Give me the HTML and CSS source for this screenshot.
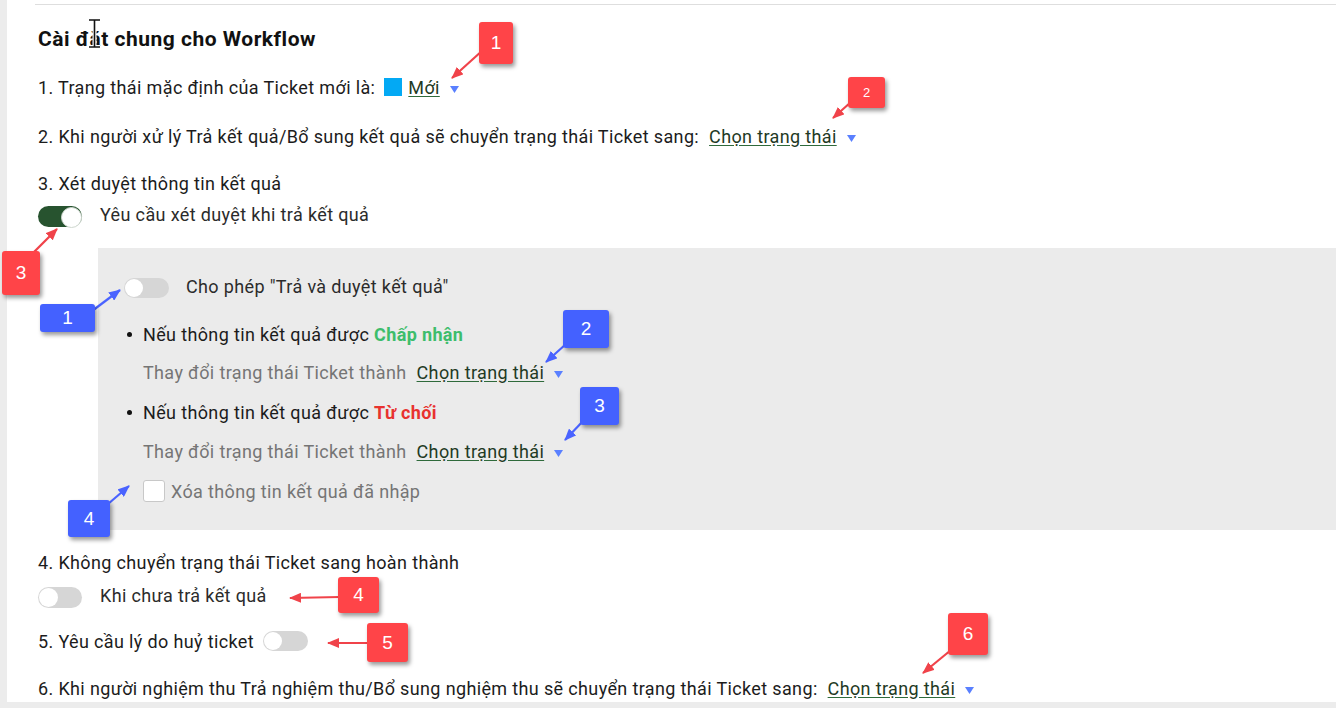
FILE: index.html
```html
<!DOCTYPE html>
<html lang="vi">
<head>
<meta charset="utf-8">
<title>Cài đặt chung cho Workflow</title>
<link rel="stylesheet" href="styles.css">
</head>
<body>
<div class="page">
  <div class="content">
    <h2 class="title">Cài đặt chung cho Workflow</h2>

    <div class="row r1">
      <span>1. Trạng thái mặc định của Ticket mới là:</span>
      <span class="swatch"></span>
      <a class="link">Mới</a>
      <svg class="caret" width="9" height="7" viewBox="0 0 9 7"><polygon points="0,0 9,0 4.5,7"/></svg>
    </div>

    <div class="row r2">
      <span>2. Khi người xử lý Trả kết quả/Bổ sung kết quả sẽ chuyển trạng thái Ticket sang:</span>
      <a class="link gap-l">Chọn trạng thái</a>
      <svg class="caret" width="9" height="7" viewBox="0 0 9 7"><polygon points="0,0 9,0 4.5,7"/></svg>
    </div>

    <div class="row r3"><span>3. Xét duyệt thông tin kết quả</span></div>

    <div class="row r3t">
      <span class="toggle on"></span>
      <span class="tlabel">Yêu cầu xét duyệt khi trả kết quả</span>
    </div>

    <div class="panel">
      <div class="row p1">
        <span class="toggle wide"></span>
        <span class="tlabel">Cho phép "Trả và duyệt kết quả"</span>
      </div>
      <div class="row p2">
        <span class="dot"></span>
        <span>Nếu thông tin kết quả được <b class="ok">Chấp nhận</b></span>
      </div>
      <div class="row p3 sub">
        <span class="muted">Thay đổi trạng thái Ticket thành</span>
        <a class="link gap-l">Chọn trạng thái</a>
        <svg class="caret" width="9" height="7" viewBox="0 0 9 7"><polygon points="0,0 9,0 4.5,7"/></svg>
      </div>
      <div class="row p4">
        <span class="dot"></span>
        <span>Nếu thông tin kết quả được <b class="no">Từ chối</b></span>
      </div>
      <div class="row p5 sub">
        <span class="muted">Thay đổi trạng thái Ticket thành</span>
        <a class="link gap-l">Chọn trạng thái</a>
        <svg class="caret" width="9" height="7" viewBox="0 0 9 7"><polygon points="0,0 9,0 4.5,7"/></svg>
      </div>
      <div class="row p6 sub">
        <span class="checkbox"></span>
        <span class="muted">Xóa thông tin kết quả đã nhập</span>
      </div>
    </div>

    <div class="row r4"><span>4. Không chuyển trạng thái Ticket sang hoàn thành</span></div>
    <div class="row r4t">
      <span class="toggle"></span>
      <span class="tlabel">Khi chưa trả kết quả</span>
    </div>

    <div class="row r5">
      <span>5. Yêu cầu lý do huỷ ticket</span>
      <span class="toggle wide inline"></span>
    </div>

    <div class="row r6">
      <span>6. Khi người nghiệm thu Trả nghiệm thu/Bổ sung nghiệm thu sẽ chuyển trạng thái Ticket sang:</span>
      <a class="link gap-l">Chọn trạng thái</a>
      <svg class="caret" width="9" height="7" viewBox="0 0 9 7"><polygon points="0,0 9,0 4.5,7"/></svg>
    </div>
  </div>
</div>

<div class="overlay">
  <svg class="arrows" width="1336" height="708" viewBox="0 0 1336 708">
    <defs>
      <marker id="hr" markerUnits="userSpaceOnUse" markerWidth="12" markerHeight="10" refX="11" refY="5" orient="auto">
        <path d="M0,0 L12,5 L0,10 z" fill="#f0434a"/>
      </marker>
      <marker id="hb" markerUnits="userSpaceOnUse" markerWidth="12" markerHeight="10" refX="11" refY="5" orient="auto">
        <path d="M0,0 L12,5 L0,10 z" fill="#4a63ff"/>
      </marker>
    </defs>
    <g stroke-width="2.2" fill="none">
      <line x1="483" y1="50" x2="452" y2="78" stroke="#f0434a" marker-end="url(#hr)"/>
      <line x1="851" y1="102" x2="833" y2="118" stroke="#f0434a" marker-end="url(#hr)"/>
      <line x1="28" y1="258" x2="57" y2="229" stroke="#f0434a" marker-end="url(#hr)"/>
      <line x1="92" y1="311" x2="120" y2="290" stroke="#4a63ff" marker-end="url(#hb)"/>
      <line x1="566" y1="344" x2="546" y2="362" stroke="#4a63ff" marker-end="url(#hb)"/>
      <line x1="584" y1="420" x2="565" y2="440" stroke="#4a63ff" marker-end="url(#hb)"/>
      <line x1="108" y1="504" x2="129" y2="486" stroke="#4a63ff" marker-end="url(#hb)"/>
      <line x1="340" y1="597" x2="290" y2="598" stroke="#f0434a" marker-end="url(#hr)"/>
      <line x1="368" y1="643" x2="328" y2="643" stroke="#f0434a" marker-end="url(#hr)"/>
      <line x1="951" y1="650" x2="923" y2="673" stroke="#f0434a" marker-end="url(#hr)"/>
    </g>
    <g class="ibeam">
      <path d="M89,20 H100 M94.5,20 V47 M89,47 H100" stroke="#fff" stroke-width="4" fill="none"/>
      <path d="M89,20 H100 M94.5,20 V47 M89,47 H100" stroke="#111" stroke-width="1.6" fill="none"/>
    </g>
  </svg>

  <div class="badge red b-r1">1</div>
  <div class="badge red small b-r2">2</div>
  <div class="badge red b-r3">3</div>
  <div class="badge blue b-b1">1</div>
  <div class="badge blue b-b2">2</div>
  <div class="badge blue b-b3">3</div>
  <div class="badge blue b-b4">4</div>
  <div class="badge red b-r4">4</div>
  <div class="badge red b-r5">5</div>
  <div class="badge red b-r6">6</div>
</div>
</body>
</html>
```

FILE: styles.css
```css
* { box-sizing: border-box; }

html, body {
  margin: 0;
  padding: 0;
  background: #fff;
}

body {
  position: relative;
  width: 1336px;
  height: 708px;
  overflow: hidden;
  font-family: Roboto, "Liberation Sans", Arial, sans-serif;
  font-size: 18px;
  letter-spacing: 0.36px;
  color: #1c1c1c;
}

.page {
  width: 1336px;
  height: 708px;
  border-left: 7px solid #ececec;
  border-bottom: 6px solid #ececec;
  background: #fff;
  overflow: hidden;
}

.content {
  margin-left: 28px;
  margin-top: 4px;
  border-top: 1px solid #dedede;
  padding-left: 3px;
  padding-top: 22px;
}

.title {
  margin: 0;
  height: 24px;
  line-height: 24px;
  font-size: 21px;
  letter-spacing: 0.5px;
  font-weight: 700;
  color: #111;
}

.row {
  display: flex;
  align-items: center;
  height: 24px;
  white-space: nowrap;
}

.r1 { margin-top: 24px; }
.r2 { margin-top: 25px; }
.r3 { margin-top: 23px; }
.r3t { margin-top: 9px; }
.r4 { margin-top: 20px; }
.r4t { margin-top: 11px; }
.r5 { margin-top: 20px; }
.r6 { margin-top: 23px; }

.swatch {
  width: 18px;
  height: 18px;
  background: #03a9f4;
  margin-left: 9px;
  margin-right: 6px;
}

.link {
  color: #1f3a25;
  text-decoration: underline;
  text-decoration-color: #2f6a3b;
  text-underline-offset: 2px;
  cursor: pointer;
}

.gap-l { margin-left: 10px; }

.caret {
  margin-left: 10px;
  margin-top: 4px;
  fill: #5a80ff;
}

.toggle {
  position: relative;
  display: inline-block;
  width: 44px;
  height: 21px;
  border-radius: 11px;
  background: #d6d6d6;
  flex: none;
}

.toggle::after {
  content: "";
  position: absolute;
  top: 1px;
  left: 1px;
  width: 19px;
  height: 19px;
  border-radius: 50%;
  background: #fff;
}

.toggle.on { background: #27532f; }
.toggle.on::after {
  left: 23px;
  border: 1px solid #cfd8cf;
}

.toggle.wide { width: 45px; height: 20px; }
.toggle.wide::after { width: 18px; height: 18px; }

.toggle.inline { margin-left: 9px; }

.tlabel {
  margin-left: 18px;
  color: #2b2b2b;
  margin-top: -3px;
}

.panel {
  margin-top: 20px;
  margin-left: 60px;
  margin-right: 0;
  background: #ebebeb;
  padding: 28px 0 27px 26px;
}

.p1 .tlabel { margin-left: 17px; margin-top: -4px; }
.p2 { margin-top: 22px; }
.p3 { margin-top: 14px; }
.p4 { margin-top: 16px; }
.p5 { margin-top: 15px; }
.p6 { margin-top: 16px; }

.dot {
  width: 5px;
  height: 5px;
  border-radius: 50%;
  background: #111;
  margin-left: 3px;
  margin-right: 11px;
}

.sub { padding-left: 19px; }

.muted { color: #757575; }

.ok { color: #3dbd6c; }
.no { color: #e8322f; }

.checkbox {
  width: 22px;
  height: 22px;
  background: #fff;
  border: 1px solid #c8c8c8;
  border-radius: 3px;
  margin-right: 6px;
}

/* annotations */
.overlay {
  position: absolute;
  top: 0;
  left: 0;
  width: 1336px;
  height: 708px;
  pointer-events: none;
}

.arrows {
  position: absolute;
  top: 0;
  left: 0;
}

.badge {
  position: absolute;
  display: flex;
  align-items: center;
  justify-content: center;
  color: #fff;
  font-family: "Liberation Sans", Arial, sans-serif;
  font-size: 19px;
  letter-spacing: 0;
  border-radius: 3px;
  box-shadow: 2px 3px 4px rgba(0, 0, 0, 0.4);
}

.red { background: #ff4448; }
.blue { background: #4461ff; }
.small { font-size: 13px; }

.b-r1 { left: 479px; top: 22px; width: 34px; height: 42px; }
.b-r2 { left: 848px; top: 77px; width: 37px; height: 31px; }
.b-r3 { left: 2px; top: 251px; width: 38px; height: 44px; }
.b-b1 { left: 40px; top: 304px; width: 55px; height: 28px; }
.b-b2 { left: 563px; top: 310px; width: 46px; height: 38px; }
.b-b3 { left: 580px; top: 387px; width: 39px; height: 38px; }
.b-b4 { left: 68px; top: 500px; width: 42px; height: 37px; }
.b-r4 { left: 338px; top: 577px; width: 41px; height: 36px; }
.b-r5 { left: 367px; top: 623px; width: 41px; height: 39px; }
.b-r6 { left: 948px; top: 613px; width: 40px; height: 42px; }
```
